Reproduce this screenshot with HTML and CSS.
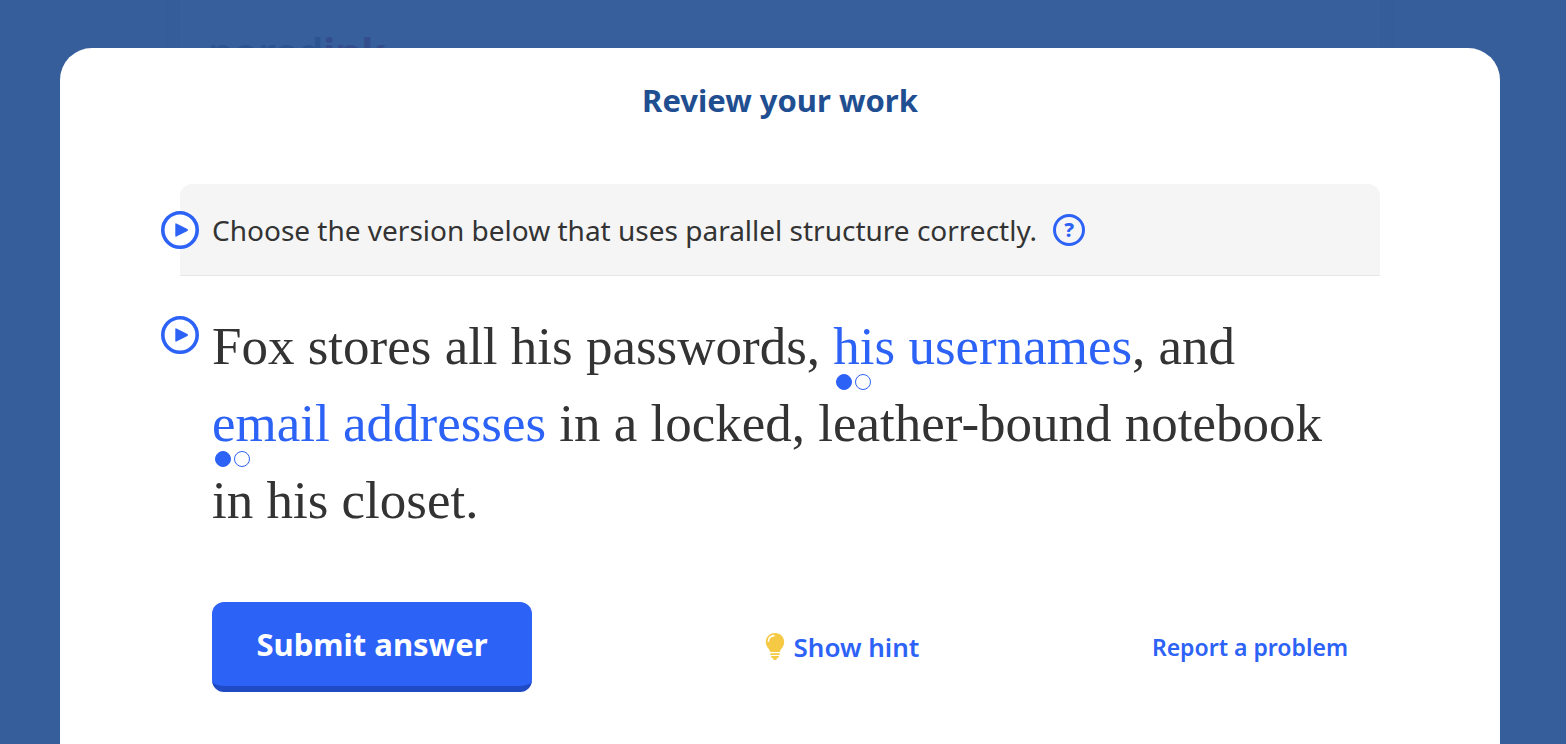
FILE: index.html
```
<!DOCTYPE html>
<html lang="en">
<head>
  <meta charset="UTF-8">
  <title>Review your work</title>
  <link rel="stylesheet" href="styles.css">
</head>
<body>

<div class="page" aria-hidden="true">
  <div class="brand">nored<span>ink</span></div>
</div>

<div class="overlay">
  <main class="modal" role="dialog" aria-labelledby="title">
    <h1 id="title">Review your work</h1>

    <div class="question">
      <div class="instructions">
        <button type="button" class="play" aria-label="Play instructions">
          <svg viewBox="0 0 38 38"><circle cx="19" cy="19" r="17.2"/><path d="M14.3 13.2v11.6q0 1.2 1.1.7l11-5.5q1.4-1 0-1.9l-11-5.6q-1.1-.5-1.1.7z"/></svg>
        </button>
        <p>Choose the version below that uses parallel structure correctly.</p>
        <button type="button" class="help" aria-label="Help">?</button>
      </div>

      <div class="sentence">
        <button type="button" class="play" aria-label="Play sentence">
          <svg viewBox="0 0 38 38"><circle cx="19" cy="19" r="17.2"/><path d="M14.3 13.2v11.6q0 1.2 1.1.7l11-5.5q1.4-1 0-1.9l-11-5.6q-1.1-.5-1.1.7z"/></svg>
        </button>
        <p>Fox stores all his passwords, <a href="#" class="choice">his usernames<span class="dots"><i class="on"></i><i></i></span></a>, and <a href="#" class="choice">email addresses<span class="dots"><i class="on"></i><i></i></span></a> in a locked, leather-bound notebook in his closet.</p>
      </div>

      <div class="actions">
        <button type="submit" class="submit">Submit answer</button>
        <button type="button" class="hint">
          <svg viewBox="0 0 20 28"><path class="bulb" d="M10 0C4.500 0 .8 4 .8 9c0 3 1.400 5 2.800 6.800C4.700 17.300 5 18 5.200 19h9.600c.2-1 .5-1.700 1.600-3.200C17.800 14 19.200 12 19.200 9c0-5-3.700-9-9.200-9z"/><path class="shine" d="M3.400 8.300C3.600 5 5.600 3 8.900 2.600"/><path class="bulb" d="M5.400 20.300h9.200v1.800H5.400zM5.800 23.100h8.400l-1.400 2.100h-1l-.5 1.800H8.700l-.5-1.800h-1z"/></svg>
          Show hint
        </button>
        <a href="#" class="report">Report a problem</a>
      </div>
    </div>
  </main>
</div>

</body>
</html>
```
FILE: styles.css
```
* {
  box-sizing: border-box;
}
body {
  margin: 0;
  background-color: #355e9a;
  color: #333;
  font-family: "Noto Sans", "Open Sans", sans-serif;
  overflow: hidden;
}
button {
  font-family: inherit;
  border: none;
  padding: 0;
  background: none;
  cursor: pointer;
}
a {
  text-decoration: none;
}
h1, p {
  margin: 0;
}
.page {
  max-width: 1200px;
  margin: 0 186px 0 180px;
  padding: 24px 28px;
  background-color: #365f9b;
  box-shadow: 0 0 0 14px #345d9a;
}
.brand {
  color: #2c5490;
  font-size: 40px;
  line-height: 56px;
  font-weight: 600;
}
.brand span {
  color: #344d8c;
  font-weight: 700;
}
.overlay {
  position: absolute;
  inset: 0;
  padding: 48px 66px 0 60px;
  overflow: hidden;
}
.modal {
  min-height: 100%;
  padding: 32px 120px 52px;
  background-color: #fff;
  border-radius: 32px 32px 0 0;
}
h1 {
  color: #1f4e91;
  font-size: 31px;
  line-height: 40px;
  font-weight: 700;
  text-align: center;
}
.question {
  margin-top: 64px;
}
.instructions {
  position: relative;
  display: flex;
  align-items: center;
  gap: 16px;
  min-height: 92px;
  padding: 0 32px;
  background-color: #f5f5f5;
  border-bottom: 1px solid #e6e6e6;
  border-radius: 12px 12px 0 0;
}
.instructions p {
  font-size: 28px;
  line-height: 40px;
}
/* play buttons hang over the left edge of the box */
.play {
  position: absolute;
  left: -19px;
  width: 38px;
  height: 38px;
  border-radius: 50%;
  background-color: #fff;
}
.play svg {
  display: block;
}
.play circle {
  fill: none;
  stroke: #2c62f6;
  stroke-width: 3.6;
}
.play path {
  fill: #2c62f6;
}
.help {
  width: 32px;
  height: 32px;
  border: 3px solid #2c62f6;
  border-radius: 50%;
  color: #2c62f6;
  font-size: 20px;
  line-height: 24px;
  font-weight: 800;
}
.sentence {
  position: relative;
  padding: 32px 32px 0;
}
.sentence .play {
  top: 40px;
}
.sentence p {
  font-family: "Liberation Serif", serif;
  font-size: 53px;
  line-height: 77px;
}
.choice {
  position: relative;
  color: #2c62f6;
  white-space: nowrap;
}
.dots {
  position: absolute;
  left: 3px;
  bottom: -15px;
  display: flex;
  gap: 3px;
}
.dots i {
  width: 16px;
  height: 16px;
  border: 1px solid #2c62f6;
  border-radius: 50%;
}
.dots .on {
  background-color: #2c62f6;
}
.actions {
  display: flex;
  justify-content: space-between;
  align-items: center;
  margin-top: 63px;
  padding: 0 32px;
}
.submit {
  width: 320px;
  height: 90px;
  background-color: #2c62f6;
  border-bottom: 6px solid #204ac4;
  border-radius: 12px;
  color: #fff;
  font-size: 31px;
  font-weight: 700;
}
.hint {
  display: flex;
  align-items: center;
  gap: 9px;
  color: #2c62f6;
  font-size: 26px;
  line-height: 32px;
  font-weight: 600;
}
.hint svg {
  width: 20px;
  height: 28px;
}
.bulb {
  fill: #f6c944;
}
.shine {
  fill: none;
  stroke: #fff;
  stroke-width: 1.6;
  stroke-linecap: round;
}
.report {
  color: #2c62f6;
  font-size: 23px;
  font-weight: 600;
}
```
